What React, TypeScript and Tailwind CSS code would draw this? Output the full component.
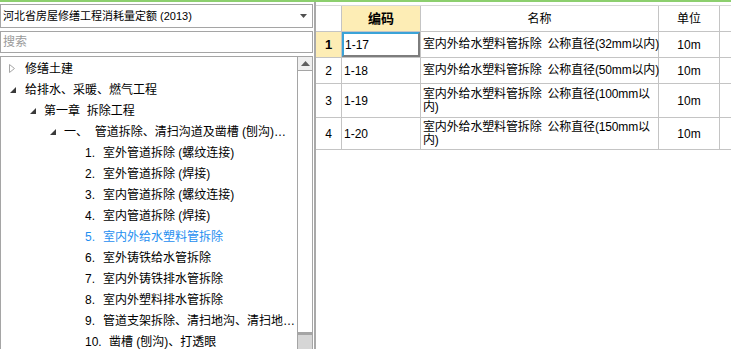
import React from 'react'

const leaves = [
  { n: '1.', t: '室外管道拆除 (螺纹连接)' },
  { n: '2.', t: '室外管道拆除 (焊接)' },
  { n: '3.', t: '室内管道拆除 (螺纹连接)' },
  { n: '4.', t: '室内管道拆除 (焊接)' },
  { n: '5.', t: '室内外给水塑料管拆除', active: true },
  { n: '6.', t: '室外铸铁给水管拆除' },
  { n: '7.', t: '室内外铸铁排水管拆除' },
  { n: '8.', t: '室内外塑料排水管拆除' },
  { n: '9.', t: '管道支架拆除、清扫地沟、清扫地…' },
  { n: '10.', t: '凿槽 (刨沟)、打透眼' },
]

const rows = [
  { no: '1', code: '1-17', spec: '公称直径(32mm以内)', rest: '', unit: '10m', h: 'h-[26px]' },
  { no: '2', code: '1-18', spec: '公称直径(50mm以内)', rest: '', unit: '10m', h: 'h-[26px]' },
  { no: '3', code: '1-19', spec: '公称直径(100mm以', rest: '内)', unit: '10m', h: 'h-[34px]' },
  { no: '4', code: '1-20', spec: '公称直径(150mm以', rest: '内)', unit: '10m', h: 'h-[32px]' },
]

function Collapsed() {
  return (
    <svg width="6" height="9" viewBox="0 0 6 9" className="shrink-0">
      <path d="M0.5 0.5 L5.5 4.5 L0.5 8.5 Z" fill="white" stroke="#a6a6a6" />
    </svg>
  )
}

function Expanded() {
  return (
    <svg width="6" height="6" viewBox="0 0 6 6" className="shrink-0">
      <path d="M6 0 L6 6 L0 6 Z" fill="#3a3a3a" />
    </svg>
  )
}

function Tree() {
  return (
    <div className="flex-1 flex border border-[#a5a5a5] border-b-0 min-h-0 mt-[3px]">
      <div className="flex-1 pt-[1px] text-[12px] text-black overflow-hidden">
        <div className="h-[21px] flex items-center pl-[8px]">
          <Collapsed />
          <span className="ml-[10px]">修缮土建</span>
        </div>
        <div className="h-[21px] flex items-center pl-[9px]">
          <Expanded />
          <span className="ml-[9px]">给排水、采暖、燃气工程</span>
        </div>
        <div className="h-[21px] flex items-center pl-[29px]">
          <Expanded />
          <span className="ml-[8px]">第一章&nbsp; 拆除工程</span>
        </div>
        <div className="h-[21px] flex items-center pl-[49px] whitespace-nowrap">
          <Expanded />
          <span className="ml-[8px]">一、&nbsp; 管道拆除、清扫沟道及凿槽 (刨沟)…</span>
        </div>
        {leaves.map((l) => (
          <div
            key={l.n}
            className={
              'h-[21px] flex items-center pl-[84px] whitespace-nowrap ' +
              (l.active ? 'text-[#1e8ef0]' : 'text-black')
            }
          >
            <span className={l.n.length > 2 ? 'w-[24px] shrink-0' : 'w-[18px] shrink-0'}>{l.n}</span>
            <span>{l.t}</span>
          </div>
        ))}
      </div>
      <div className="w-[15px] flex flex-col border-l border-[#a5a5a5]">
        <div className="h-[14px] flex items-center justify-center border-b border-[#a5a5a5] bg-[#f0f0f0]">
          <svg width="9" height="5" viewBox="0 0 9 5">
            <path d="M4.5 0 L9 5 L0 5 Z" fill="#606060" />
          </svg>
        </div>
        <div className="h-[264px] bg-white border-b-[3px] border-[#a5a5a5]" />
        <div className="flex-1 bg-[#d6d6d6]" />
      </div>
    </div>
  )
}

function Grid() {
  const cell = 'border-r border-b border-[#c4c4c4] flex items-center'
  return (
    <div className="flex-1 ml-[1px] border-l-2 border-[#a9a9a9] pt-[3px] bg-white">
      <div className="grid grid-cols-[26px_79px_238px_61px_1fr] text-[12px] text-black border-t border-[#d8d8d8]">
        <div className={cell + ' h-[26px]'} />
        <div className={cell + ' h-[26px] justify-center bg-[#fdedb5] font-bold text-[13px]'}>编码</div>
        <div className={cell + ' h-[26px] justify-center'}>名称</div>
        <div className={cell + ' h-[26px] justify-center'}>单位</div>
        <div className="h-[26px] border-b border-[#c4c4c4]" />
        {rows.map((r, i) => (
          <React.Fragment key={r.no}>
            <div
              className={
                cell + ' ' + r.h + ' justify-center ' + (i === 0 ? 'bg-[#fdedb5] font-bold text-[13px]' : '')
              }
            >
              {r.no}
            </div>
            {i === 0 ? (
              <div className={'border-r border-b border-[#c4c4c4] ' + r.h}>
                <div className="h-full flex items-center pl-[1px] border-l-2 border-t-2 border-[#3aa3d8] border-r-2 border-r-[#7d7d7d] border-b-2 border-b-[#7d7d7d]">
                  {r.code}
                </div>
              </div>
            ) : (
              <div className={cell + ' ' + r.h + ' pl-[2px]'}>{r.code}</div>
            )}
            <div className={cell + ' ' + r.h + ' pl-[2px] leading-[13px] tracking-[-0.15px]'}>
              <div>
                <div className="whitespace-nowrap">
                  <span>室内外给水塑料管拆除</span>
                  <span className="ml-[6px]">{r.spec}</span>
                </div>
                {r.rest && <div>{r.rest}</div>}
              </div>
            </div>
            <div className={cell + ' ' + r.h + ' justify-center'}>{r.unit}</div>
            <div className={'border-b border-[#c4c4c4] ' + r.h} />
          </React.Fragment>
        ))}
      </div>
    </div>
  )
}

export default function App() {
  return (
    <div className="w-[731px] h-[349px] overflow-hidden bg-white border-t-2 border-[#8ccf6e] font-['Liberation_Sans','Noto_Sans_CJK_SC',sans-serif]">
      <div className="flex h-full">
        <div className="w-[313px] flex flex-col pt-[2px]">
          <div className="h-[24px] border border-[#a5a5a5] flex items-center pl-[2px] pr-[4px] text-[11px] text-black">
            <span className="flex-1 whitespace-nowrap">河北省房屋修缮工程消耗量定额 (2013)</span>
            <svg width="7" height="4" viewBox="0 0 7 4" className="mr-[1px]">
              <path d="M0 0 L7 0 L3.5 4 Z" fill="#505050" />
            </svg>
          </div>
          <div className="h-[22px] mt-[3px] border border-[#a5a5a5] flex items-center pl-[2px] text-[12px] text-[#9a9a9a]">
            搜索
          </div>
          <Tree />
        </div>
        <Grid />
      </div>
    </div>
  )
}
